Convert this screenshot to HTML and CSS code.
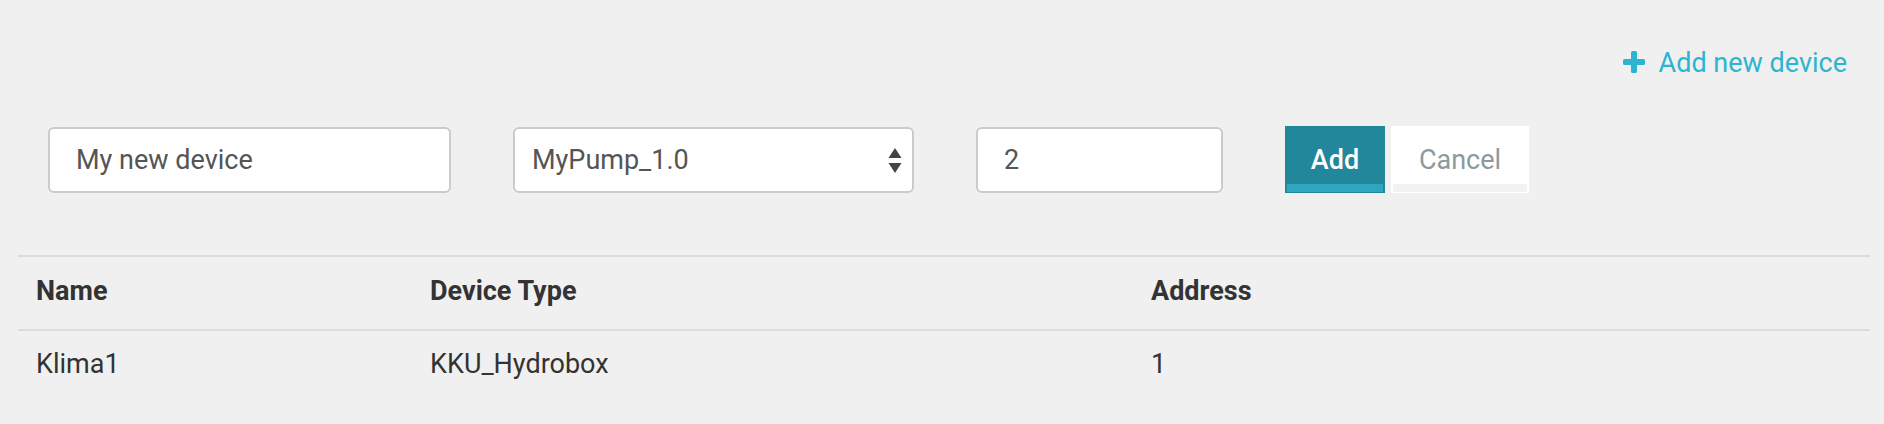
FILE: index.html
```html
<!DOCTYPE html>
<html lang="en">
<head>
<meta charset="utf-8">
<title>Devices</title>
<link rel="stylesheet" href="styles.css">
</head>
<body>
<div class="page">
  <div class="topbar">
    <a class="add-link" href="#">
      <svg class="plus" width="22" height="22" viewBox="0 0 22 22" aria-hidden="true">
        <rect x="8" y="0" width="6" height="22" rx="1.5" fill="#2db4d0"/>
        <rect x="0" y="8" width="22" height="6" rx="1.5" fill="#2db4d0"/>
      </svg>
      <span>Add new device</span>
    </a>
  </div>

  <form class="form-row">
    <input class="field field-name" type="text" value="My new device">
    <div class="select-wrap">
      <select class="field field-select">
        <option>MyPump_1.0</option>
      </select>
      <svg class="select-arrows" width="14" height="26" viewBox="0 0 14 26" aria-hidden="true">
        <polygon points="7,0 13.5,10 0.5,10" fill="#444"/>
        <polygon points="0.5,15 13.5,15 7,25" fill="#444"/>
      </svg>
    </div>
    <input class="field field-num" type="text" value="2">
    <div class="buttons">
      <button type="button" class="btn btn-add">Add</button>
      <button type="button" class="btn btn-cancel">Cancel</button>
    </div>
  </form>

  <div class="table">
    <div class="tr th">
      <div class="cell">Name</div>
      <div class="cell">Device Type</div>
      <div class="cell">Address</div>
    </div>
    <div class="tr td">
      <div class="cell">Klima1</div>
      <div class="cell">KKU_Hydrobox</div>
      <div class="cell">1</div>
    </div>
  </div>
</div>
</body>
</html>
```

FILE: styles.css
```css
* { box-sizing: border-box; }

html, body {
  margin: 0;
  padding: 0;
}

body {
  background: #f0f0f0;
  font-family: Roboto, "Liberation Sans", sans-serif;
  color: #333;
}

.page {
  width: 1884px;
  height: 424px;
  overflow: hidden;
}

.topbar {
  display: flex;
  justify-content: flex-end;
  padding: 48px 37px 0 0;
}

.add-link {
  display: flex;
  align-items: center;
  gap: 14px;
  color: #2db4d0;
  text-decoration: none;
  font-size: 27px;
  line-height: 30px;
  height: 30px;
}

.plus {
  display: block;
  margin-top: -2px;
}

.form-row {
  display: flex;
  align-items: flex-end;
  margin: 48px 0 0 0;
  padding-left: 48px;
  gap: 62px;
}

.field {
  height: 66px;
  border: 2px solid #cbcbcb;
  border-radius: 6px;
  background: #fff;
  font-family: Roboto, "Liberation Sans", sans-serif;
  font-size: 27px;
  color: #555;
  padding: 0 20px 0 26px;
  outline: none;
  margin: 0;
}

.field-name { width: 403px; }
.field-num { width: 247px; }

.select-wrap {
  position: relative;
  width: 401px;
}

.field-select {
  width: 100%;
  -webkit-appearance: none;
  appearance: none;
  padding-left: 17px;
}

.select-arrows {
  position: absolute;
  right: 12px;
  top: 21px;
}

.buttons {
  display: flex;
  gap: 6px;
}

.btn {
  height: 67px;
  font-family: Roboto, "Liberation Sans", sans-serif;
  font-size: 27px;
  padding: 0 20px;
  border: 2px solid;
  border-bottom-width: 1px;
  margin: 0;
  cursor: pointer;
}

.btn-add {
  width: 100px;
  background: #22879b;
  border-color: #22879b;
  color: #fff;
  font-weight: 500;
  box-shadow: inset 0 -8px 0 #2ea6bf;
}

.btn-cancel {
  width: 138px;
  background: #fff;
  border-color: #fff;
  color: #8c9a9c;
  box-shadow: inset 0 -8px 0 #f2f2f2;
}

.table {
  margin: 62px 14px 0 18px;
  border-top: 2px solid #dcdcdc;
}

.tr {
  display: grid;
  grid-template-columns: 394px 721px 1fr;
}

.th {
  border-bottom: 2px solid #dcdcdc;
  font-weight: 700;
  height: 74px;
  padding-top: 19px;
}

.td {
  padding-top: 18px;
}

.cell {
  padding-left: 18px;
  font-size: 27px;
  line-height: 30px;
  color: #333;
}
```
